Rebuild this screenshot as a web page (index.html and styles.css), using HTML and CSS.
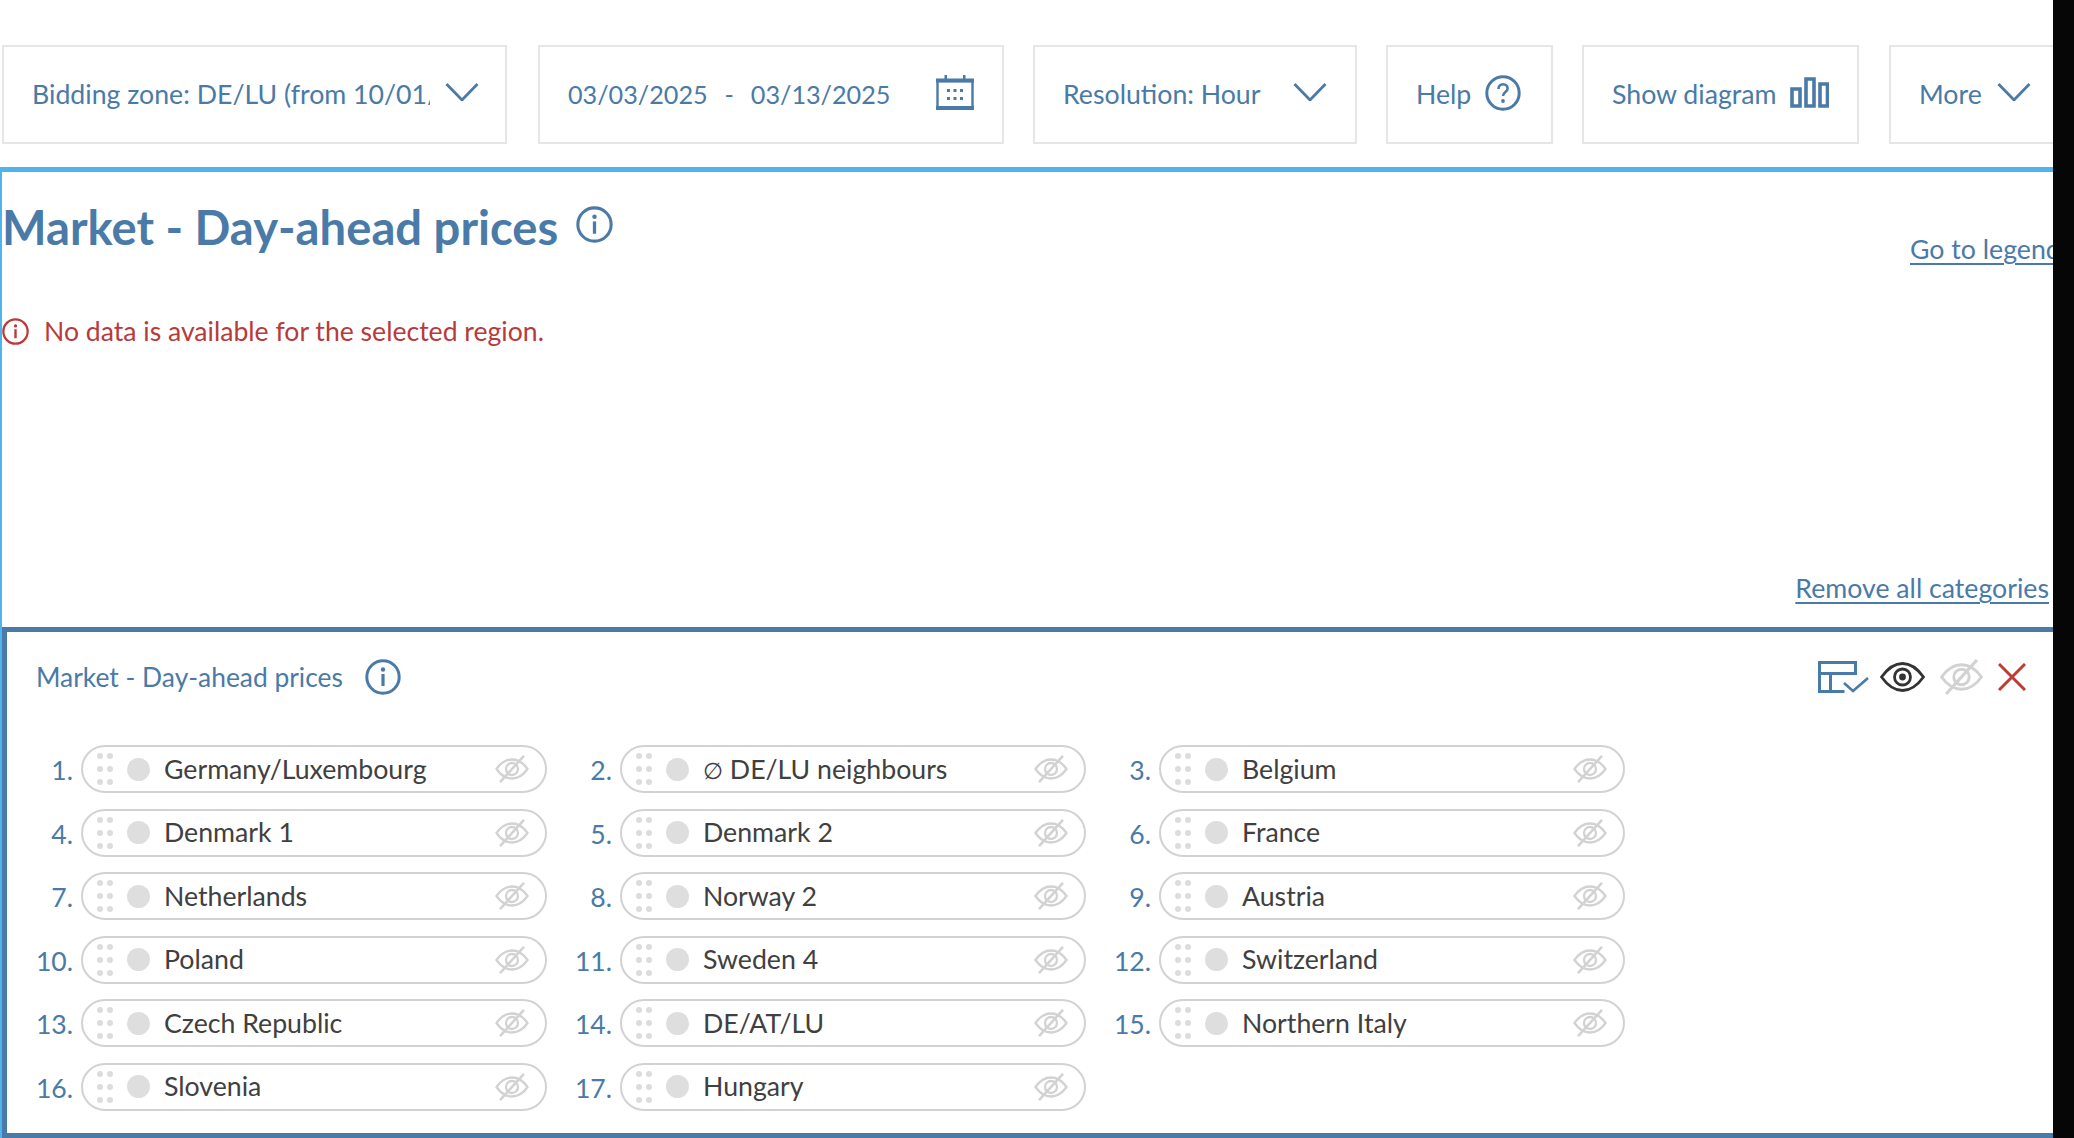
FILE: index.html
```html
<!DOCTYPE html>
<html lang="en">
<head>
<meta charset="utf-8">
<title>Market - Day-ahead prices</title>
<link rel="stylesheet" href="styles.css">
</head>
<body>
<svg class="defs" width="0" height="0" aria-hidden="true">
  <symbol id="chev" viewBox="0 0 34 18"><path d="M1.5 1 17 17 32.5 1" fill="none" stroke="currentColor" stroke-width="2.8"/></symbol>
  <symbol id="eyeoff" viewBox="0 0 34 28">
    <path d="M1.5 14C6 7.5 11 4.5 17 4.5S28 7.5 32.5 14C28 20.5 23 23.5 17 23.5S6 20.5 1.5 14Z" fill="none" stroke="currentColor" stroke-width="2.3"/>
    <circle cx="17" cy="14" r="6" fill="none" stroke="currentColor" stroke-width="2.3"/>
    <path d="M29 .8 5 27.2" fill="none" stroke="currentColor" stroke-width="2.5"/>
  </symbol>
  <symbol id="info" viewBox="0 0 36 36">
    <circle cx="18" cy="18" r="16.2" fill="none" stroke="currentColor" stroke-width="3"/>
    <circle cx="18" cy="10.5" r="2.2" fill="currentColor"/>
    <path d="M18 15v12" stroke="currentColor" stroke-width="3.2"/>
  </symbol>
</svg>
<div class="page">
  <main class="content">
    <nav class="toolbar">
      <div class="tool tool-zone"><span class="tool-label clip">Bidding zone: DE/LU (from 10/01/2018)</span><svg class="chev"><use href="#chev"/></svg></div>
      <div class="tool tool-date"><span class="tool-label date-label">03/03/2025&nbsp; - &nbsp;03/13/2025</span>
        <svg class="cal" viewBox="0 0 38 35"><path d="M1.5 6h35v27.5h-35z" fill="none" stroke="currentColor" stroke-width="2.4"/><path d="M0 3.5h38v4H0zM0 31h38v4H0zM8.5 0H11v5H8.5zM27 0h2.5v5H27z" fill="currentColor"/><path d="M11 14h3v3h-3zM17.5 14h3v3h-3zM24 14h3v3h-3zM11 22h3v3h-3zM17.5 22h3v3h-3zM24 22h3v3h-3z" fill="currentColor"/></svg>
      </div>
      <div class="tool tool-res"><span class="tool-label">Resolution: Hour</span><svg class="chev"><use href="#chev"/></svg></div>
      <div class="tool tool-help"><span class="tool-label">Help</span>
        <svg class="help-ic" viewBox="0 0 36 36"><circle cx="18" cy="18" r="16.2" fill="none" stroke="currentColor" stroke-width="3"/><path d="M13.5 14c0-3 2-4.700 4.600-4.700s4.500 1.700 4.500 4.200c0 3.600-4.600 3.600-4.600 7.500" fill="none" stroke="currentColor" stroke-width="2.6"/><circle cx="18" cy="26" r="1.9" fill="currentColor"/></svg>
      </div>
      <div class="tool tool-diagram"><span class="tool-label">Show diagram</span>
        <svg class="bars" viewBox="0 0 39 31"><path d="M2 12h8v17H2zM16 2h8v27h-8zM30 7h7.500v22H30z" fill="none" stroke="currentColor" stroke-width="3.6"/></svg>
      </div>
      <div class="tool tool-more"><span class="tool-label">More</span><svg class="chev"><use href="#chev"/></svg></div>
    </nav>

    <section class="panel">
      <header class="panel-head">
        <div class="title-wrap">
          <h1 class="title">Market - Day-ahead prices</h1>
          <svg class="title-info"><use href="#info"/></svg>
        </div>
        <a class="link legend-link">Go to legend</a>
      </header>
      <p class="error">
        <svg class="error-ic"><use href="#info"/></svg>
        <span>No data is available for the selected region.</span>
      </p>
      <div class="remove-row"><a class="link">Remove all categories</a></div>

      <section class="category">
        <header class="cat-head">
          <div class="cat-title"><span>Market - Day-ahead prices</span><svg class="cat-info"><use href="#info"/></svg></div>
          <div class="cat-actions">
            <svg class="act-table" viewBox="0 0 51 32"><path d="M1.5 1.5h36v11h-36zM1.5 12.5h11v18h-11zM12.500 30.500h14M12.500 12.500v18M37.500 1.500v11" fill="none" stroke="currentColor" stroke-width="3"/><path d="M26 22l9 8 15-13" fill="none" stroke="currentColor" stroke-width="2.6"/></svg>
            <svg class="act-eye" viewBox="0 0 45 30"><path d="M1.500 15C8 6 14.500 1.500 22.500 1.500S37 6 43.500 15C37 24 30.500 28.500 22.500 28.500S8 24 1.500 15Z" fill="none" stroke="currentColor" stroke-width="2.8"/><circle cx="22.500" cy="15" r="8" fill="none" stroke="currentColor" stroke-width="2.8"/><circle cx="22.500" cy="15" r="3.4" fill="currentColor"/></svg>
            <svg class="act-off"><use href="#eyeoff"/></svg>
            <svg class="act-x" viewBox="0 0 28 28"><path d="M1 1l26 26M27 1 1 27" fill="none" stroke="currentColor" stroke-width="3"/></svg>
          </div>
        </header>
        <ol class="pills">
          <li class="item"><span class="num">1.</span><div class="pill"><span class="grip"><i></i><i></i><i></i><i></i><i></i><i></i></span><span class="dot"></span><span class="name">Germany/Luxembourg</span><svg class="off"><use href="#eyeoff"/></svg></div></li>
          <li class="item"><span class="num">2.</span><div class="pill"><span class="grip"><i></i><i></i><i></i><i></i><i></i><i></i></span><span class="dot"></span><span class="name"><span class="avg">∅</span> DE/LU neighbours</span><svg class="off"><use href="#eyeoff"/></svg></div></li>
          <li class="item"><span class="num">3.</span><div class="pill"><span class="grip"><i></i><i></i><i></i><i></i><i></i><i></i></span><span class="dot"></span><span class="name">Belgium</span><svg class="off"><use href="#eyeoff"/></svg></div></li>
          <li class="item"><span class="num">4.</span><div class="pill"><span class="grip"><i></i><i></i><i></i><i></i><i></i><i></i></span><span class="dot"></span><span class="name">Denmark 1</span><svg class="off"><use href="#eyeoff"/></svg></div></li>
          <li class="item"><span class="num">5.</span><div class="pill"><span class="grip"><i></i><i></i><i></i><i></i><i></i><i></i></span><span class="dot"></span><span class="name">Denmark 2</span><svg class="off"><use href="#eyeoff"/></svg></div></li>
          <li class="item"><span class="num">6.</span><div class="pill"><span class="grip"><i></i><i></i><i></i><i></i><i></i><i></i></span><span class="dot"></span><span class="name">France</span><svg class="off"><use href="#eyeoff"/></svg></div></li>
          <li class="item"><span class="num">7.</span><div class="pill"><span class="grip"><i></i><i></i><i></i><i></i><i></i><i></i></span><span class="dot"></span><span class="name">Netherlands</span><svg class="off"><use href="#eyeoff"/></svg></div></li>
          <li class="item"><span class="num">8.</span><div class="pill"><span class="grip"><i></i><i></i><i></i><i></i><i></i><i></i></span><span class="dot"></span><span class="name">Norway 2</span><svg class="off"><use href="#eyeoff"/></svg></div></li>
          <li class="item"><span class="num">9.</span><div class="pill"><span class="grip"><i></i><i></i><i></i><i></i><i></i><i></i></span><span class="dot"></span><span class="name">Austria</span><svg class="off"><use href="#eyeoff"/></svg></div></li>
          <li class="item"><span class="num">10.</span><div class="pill"><span class="grip"><i></i><i></i><i></i><i></i><i></i><i></i></span><span class="dot"></span><span class="name">Poland</span><svg class="off"><use href="#eyeoff"/></svg></div></li>
          <li class="item"><span class="num">11.</span><div class="pill"><span class="grip"><i></i><i></i><i></i><i></i><i></i><i></i></span><span class="dot"></span><span class="name">Sweden 4</span><svg class="off"><use href="#eyeoff"/></svg></div></li>
          <li class="item"><span class="num">12.</span><div class="pill"><span class="grip"><i></i><i></i><i></i><i></i><i></i><i></i></span><span class="dot"></span><span class="name">Switzerland</span><svg class="off"><use href="#eyeoff"/></svg></div></li>
          <li class="item"><span class="num">13.</span><div class="pill"><span class="grip"><i></i><i></i><i></i><i></i><i></i><i></i></span><span class="dot"></span><span class="name">Czech Republic</span><svg class="off"><use href="#eyeoff"/></svg></div></li>
          <li class="item"><span class="num">14.</span><div class="pill"><span class="grip"><i></i><i></i><i></i><i></i><i></i><i></i></span><span class="dot"></span><span class="name">DE/AT/LU</span><svg class="off"><use href="#eyeoff"/></svg></div></li>
          <li class="item"><span class="num">15.</span><div class="pill"><span class="grip"><i></i><i></i><i></i><i></i><i></i><i></i></span><span class="dot"></span><span class="name">Northern Italy</span><svg class="off"><use href="#eyeoff"/></svg></div></li>
          <li class="item"><span class="num">16.</span><div class="pill"><span class="grip"><i></i><i></i><i></i><i></i><i></i><i></i></span><span class="dot"></span><span class="name">Slovenia</span><svg class="off"><use href="#eyeoff"/></svg></div></li>
          <li class="item"><span class="num">17.</span><div class="pill"><span class="grip"><i></i><i></i><i></i><i></i><i></i><i></i></span><span class="dot"></span><span class="name">Hungary</span><svg class="off"><use href="#eyeoff"/></svg></div></li>
        </ol>
      </section>
    </section>
  </main>
  <div class="edge"></div>
</div>
</body>
</html>
```

FILE: styles.css
```css
* { box-sizing: border-box; }
html, body { margin: 0; height: 100%; overflow: hidden; background: #fff; }
body { font-family: "Lato", "Noto Sans", sans-serif; color: #4a7aa7; }
.defs { position: absolute; }
.page { display: flex; height: 1138px; width: 2074px; }
.content { flex: 0 0 2053px; width: 2053px; overflow: hidden; display: flex; flex-direction: column; }
.edge { flex: 1; background: #060606; }

.toolbar { flex: 0 0 167px; display: flex; gap: 30px; padding: 45px 0 0 2px; }
.tool { height: 99px; border: 2px solid #e6e6e6; display: flex; align-items: center; padding-left: 28px; font-size: 26.7px; flex: none; }
.tool-label { white-space: nowrap; margin-top: -2px; }
.clip { width: 398px; overflow: hidden; flex: none; }
.date-label { font-size: 25.2px; word-spacing: 2px; }
.tool-zone { width: 505px; }
.tool-date { width: 466px; margin-left: 1px; }
.tool-res { width: 324px; margin-left: -1px; }
.tool-help { width: 167px; margin-left: -1px; }
.tool-diagram { width: 277px; margin-left: -1px; }
.tool-more { width: 200px; margin-left: 0; }
.chev { width: 34px; height: 18px; flex: none; margin-top: -6px; }
.tool-zone .chev { margin-left: 15px; }
.tool-res .chev { margin-left: 33px; }
.tool-more .chev { margin-left: 15px; }
.cal { width: 38px; height: 35px; margin-left: 46px; margin-top: -4px; flex: none; }
.help-ic { width: 36px; height: 36px; margin-left: 14px; margin-top: -4px; flex: none; }
.bars { width: 39px; height: 31px; margin-left: 13px; margin-top: -4px; flex: none; }

.panel { flex: 1; min-height: 0; border-top: 5px solid #4fb3ee; border-left: 2px solid #4fb3ee; display: flex; flex-direction: column; }
.panel-head { height: 94px; display: flex; justify-content: space-between; align-items: flex-start; }
.title-wrap { display: flex; align-items: flex-start; gap: 18px; padding-top: 26px; }
.title { margin: 0; font-size: 47.2px; line-height: 58px; font-weight: 700; white-space: nowrap; }
.title-info { width: 37px; height: 37px; margin-top: 8px; flex: none; }
.link { text-decoration: underline; text-underline-offset: 4px; font-size: 26.7px; white-space: nowrap; color: #4a7aa7; }
.legend-link { margin-top: 61px; width: 143px; overflow: hidden; padding-bottom: 6px; }
.error { margin: 45px 0 0; display: flex; align-items: center; gap: 15px; height: 40px; color: #b93a3a; font-size: 26.6px; }
.error-ic { width: 27px; height: 27px; flex: none; }
.remove-row { margin: 215px 0 17px; height: 44px; display: flex; justify-content: flex-end; padding-right: 4px; align-items: center; }
.category { flex: 1; min-height: 0; border: solid #4a7aa7; border-width: 5px 0 5px 5px; }
.cat-head { height: 75px; display: flex; justify-content: space-between; align-items: center; padding: 15px 27px 0 29px; font-size: 26.4px; }
.cat-title { display: flex; align-items: center; gap: 22px; }
.cat-info { width: 36px; height: 36px; flex: none; }
.cat-actions { display: flex; align-items: center; gap: 14px; }
.act-table { width: 51px; height: 32px; flex: none; margin-right: -3px; }
.act-eye { width: 45px; height: 30px; color: #333; flex: none; }
.act-off { width: 45px; height: 36px; color: #d2d2d2; flex: none; }
.act-x { width: 28px; height: 28px; color: #bf3b36; flex: none; }

.pills { list-style: none; margin: 38px 0 0; padding: 0 0 0 17px; display: grid; grid-template-columns: repeat(3, 539px); grid-auto-rows: 48px; row-gap: 15.6px; }
.item { display: flex; align-items: center; }
.num { width: 49px; flex: none; text-align: right; font-size: 26.6px; margin-top: 2px; }
.pill { margin-left: 8px; width: 466px; height: 48px; border: 2px solid #d2d2d2; border-radius: 24px; display: flex; align-items: center; padding-left: 15px; color: #404040; font-size: 26.7px; }
.grip { width: 16px; display: grid; grid-template-columns: 6px 6px; gap: 7px 4px; flex: none; margin-left: -1px; }
.grip i { width: 6px; height: 6px; border-radius: 50%; background: #dcdcdc; }
.dot { width: 23px; height: 23px; border-radius: 50%; background: #dedede; margin-left: 14px; flex: none; }
.name { margin-left: 14px; flex: 1; white-space: nowrap; margin-top: -1px; }
.avg { font-size: 23px; }
.off { width: 34px; height: 28px; color: #d2d2d2; margin-right: 16px; flex: none; }
```
